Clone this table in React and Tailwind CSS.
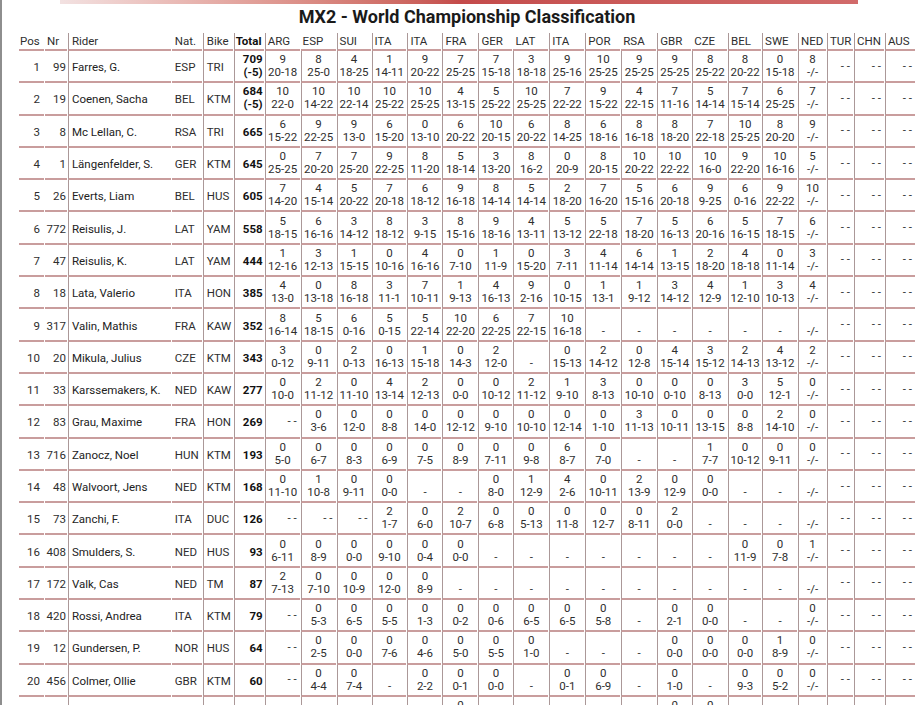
const EVENTS = ["ARG", "ESP", "SUI", "ITA", "ITA", "FRA", "GER", "LAT", "ITA", "POR", "RSA", "GBR", "CZE", "BEL", "SWE", "NED", "TUR", "CHN", "AUS"];

// header cells without a divider on their left
const NO_HEAD_LINE = [1, 7, 10, 12];

const COLS = [
  "w-[25px]", "w-[22px]", "w-[103px]", "w-[30px]", "w-[30px]", "w-[30px]",
  "w-[35px]", "w-[35px]", "w-[34px]", "w-[35px]", "w-[34px]", "w-[35px]", "w-[34px]", "w-[35px]",
  "w-[35px]", "w-[35px]", "w-[35px]", "w-[34px]", "w-[35px]", "w-[33px]", "w-[35px]",
  "w-[28px]", "w-[26px]", "w-[30px]", "w-[30px]",
];

const riders = [
  [1, 99, "Farres, G.", "ESP", "TRI", "709", "(-5)", ["9 20-18", "8 25-0", "4 18-25", "1 14-11", "9 20-22", "7 25-25", "7 15-18", "3 18-18", "9 25-16", "10 25-25", "9 25-25", "9 25-25", "8 25-22", "8 20-22", "0 15-18", "8 -/-"]],
  [2, 19, "Coenen, Sacha", "BEL", "KTM", "684", "(-5)", ["10 22-0", "10 14-22", "10 22-14", "10 25-22", "10 25-25", "4 13-15", "5 25-22", "10 25-25", "7 22-22", "9 15-22", "4 22-15", "7 11-16", "5 14-14", "7 15-14", "6 25-25", "7 -/-"]],
  [3, 8, "Mc Lellan, C.", "RSA", "TRI", "665", null, ["6 15-22", "9 22-25", "9 13-0", "6 15-20", "0 13-10", "6 20-22", "10 20-15", "6 20-22", "8 14-25", "6 18-16", "8 16-18", "8 18-20", "7 22-18", "10 25-25", "8 20-20", "9 -/-"]],
  [4, 1, "Längenfelder, S.", "GER", "KTM", "645", null, ["0 25-25", "7 20-20", "7 25-20", "9 22-25", "8 11-20", "5 18-14", "3 13-20", "8 16-2", "0 20-9", "8 20-15", "10 20-22", "10 22-22", "10 16-0", "9 22-20", "10 16-16", "5 -/-"]],
  [5, 26, "Everts, Liam", "BEL", "HUS", "605", null, ["7 14-20", "4 15-14", "5 20-22", "7 20-18", "6 18-12", "9 16-18", "8 14-14", "5 14-14", "2 18-20", "7 16-20", "5 15-16", "6 20-18", "9 9-25", "6 0-16", "9 22-22", "10 -/-"]],
  [6, 772, "Reisulis, J.", "LAT", "YAM", "558", null, ["5 18-15", "6 16-16", "3 14-12", "8 18-12", "3 9-15", "8 15-16", "9 18-16", "4 13-11", "5 13-12", "5 22-18", "7 18-20", "5 16-13", "6 20-16", "5 16-15", "7 18-15", "6 -/-"]],
  [7, 47, "Reisulis, K.", "LAT", "YAM", "444", null, ["1 12-16", "3 12-13", "1 15-15", "0 10-16", "4 16-16", "0 7-10", "1 11-9", "0 15-20", "3 7-11", "4 11-14", "6 14-14", "1 13-15", "2 18-20", "4 18-18", "0 11-14", "3 -/-"]],
  [8, 18, "Lata, Valerio", "ITA", "HON", "385", null, ["4 13-0", "0 13-18", "8 16-18", "3 11-1", "7 10-11", "1 9-13", "4 16-13", "9 2-16", "0 10-15", "1 13-1", "1 9-12", "3 14-12", "4 12-9", "1 12-10", "3 10-13", "4 -/-"]],
  [9, 317, "Valin, Mathis", "FRA", "KAW", "352", null, ["8 16-14", "5 18-15", "6 0-16", "5 0-15", "5 22-14", "10 22-20", "6 22-25", "7 22-15", "10 16-18", "-", "-", "-", "-", "-", "-", "-/-"]],
  [10, 20, "Mikula, Julius", "CZE", "KTM", "343", null, ["3 0-12", "0 9-11", "2 0-13", "0 16-13", "1 15-18", "0 14-3", "2 12-0", "-", "0 15-13", "2 14-12", "0 12-8", "4 15-14", "3 15-12", "2 14-13", "4 13-12", "2 -/-"]],
  [11, 33, "Karssemakers, K.", "NED", "KAW", "277", null, ["0 10-0", "2 11-12", "0 11-10", "4 13-14", "2 12-13", "0 0-0", "0 10-12", "2 11-12", "1 9-10", "3 8-13", "0 10-10", "0 0-10", "0 8-13", "3 0-0", "5 12-1", "0 -/-"]],
  [12, 83, "Grau, Maxime", "FRA", "HON", "269", null, ["--", "0 3-6", "0 12-0", "0 8-8", "0 14-0", "0 12-12", "0 9-10", "0 10-10", "0 12-14", "0 1-10", "3 11-13", "0 10-11", "0 13-15", "0 8-8", "2 14-10", "0 -/-"]],
  [13, 716, "Zanocz, Noel", "HUN", "KTM", "193", null, ["0 5-0", "0 6-7", "0 8-3", "0 6-9", "0 7-5", "0 8-9", "0 7-11", "0 9-8", "6 8-7", "0 7-0", "-", "-", "1 7-7", "0 10-12", "0 9-11", "0 -/-"]],
  [14, 48, "Walvoort, Jens", "NED", "KTM", "168", null, ["0 11-10", "1 10-8", "0 9-11", "0 0-0", "-", "-", "0 8-0", "1 12-9", "4 2-6", "0 10-11", "2 13-9", "0 12-9", "0 0-0", "-", "-", "-/-"]],
  [15, 73, "Zanchi, F.", "ITA", "DUC", "126", null, ["--", "--", "--", "2 1-7", "0 6-0", "2 10-7", "0 6-8", "0 5-13", "0 11-8", "0 12-7", "0 8-11", "2 0-0", "-", "-", "-", "-/-"]],
  [16, 408, "Smulders, S.", "NED", "HUS", "93", null, ["0 6-11", "0 8-9", "0 0-0", "0 9-10", "0 0-4", "0 0-0", "-", "-", "-", "-", "-", "-", "-", "0 11-9", "0 7-8", "1 -/-"]],
  [17, 172, "Valk, Cas", "NED", "TM", "87", null, ["2 7-13", "0 7-10", "0 10-9", "0 12-0", "0 8-9", "-", "-", "-", "-", "-", "-", "-", "-", "-", "-", "-/-"]],
  [18, 420, "Rossi, Andrea", "ITA", "KTM", "79", null, ["--", "0 5-3", "0 6-5", "0 5-5", "0 1-3", "0 0-2", "0 0-6", "0 6-5", "0 6-5", "0 5-8", "-", "0 2-1", "0 0-0", "-", "-", "0 -/-"]],
  [19, 12, "Gundersen, P.", "NOR", "HUS", "64", null, ["--", "0 2-5", "0 0-0", "0 7-6", "0 4-6", "0 5-0", "0 5-5", "0 1-0", "-", "-", "-", "0 0-0", "0 0-0", "0 0-0", "1 8-9", "0 -/-"]],
  [20, 456, "Colmer, Ollie", "GBR", "KTM", "60", null, ["--", "0 4-4", "0 7-4", "-", "0 2-2", "0 0-1", "0 0-0", "-", "0 0-1", "0 6-9", "-", "0 1-0", "-", "0 9-3", "0 5-2", "0 -/-"]],
  [21, 74, "Horgmo, Kevin", "NOR", "HON", "55", null, ["--", "--", "-", "-", "-", "0 3-1", "-", "-", "-", "-", "-", "0 1-2", "0 4-1", "-", "-", "-/-"]],
];

const LINE = "border-l border-l-[#ab9898]";
const BOTTOM = "border-b-2 border-b-[#c99d9d]";

function ResultCell({ value, narrow }) {
  if (value === "--") {
    return (
      <td className={`${LINE} ${BOTTOM} text-right align-middle pr-[3px]`}>- -</td>
    );
  }
  const parts = value.split(" ");
  const top = parts.length > 1 ? parts[0] : "\u00a0";
  const bottom = parts.length > 1 ? parts[1] : parts[0];
  return (
    <td className={`${LINE} ${BOTTOM} text-center align-middle ${narrow ? "px-0" : "px-[1px]"}`}>
      <div>{top}</div>
      <div>{bottom}</div>
    </td>
  );
}

export default function App() {
  return (
    <div className="w-[916px] h-[705px] overflow-hidden bg-white border-l-2 border-l-[#8e8e8e] font-['Roboto',sans-serif] text-[#2e2e2e]">
      <div className="h-[4px] mx-[58px] bg-linear-to-r from-[#efdada] via-[#b51d1d] to-[#c64545] opacity-80"></div>
      <div className="ml-[16px] h-[29px] pt-[3px] text-center text-[18px] leading-[20px] font-bold text-[#1a1a1a]">
        MX2 - World Championship Classification
      </div>
      <table className="ml-[16px] table-fixed border-separate border-spacing-x-px border-spacing-y-0 text-[11.5px] leading-[13px] whitespace-nowrap">
        <colgroup>
          {COLS.map((c, i) => (
            <col key={i} className={c} />
          ))}
        </colgroup>
        <thead>
          <tr className="h-[18px]">
            <th className={`${BOTTOM} font-normal text-left pl-[1px]`}>Pos</th>
            <th className={`${BOTTOM} font-normal text-left pl-[2px]`}>Nr</th>
            <th className={`${LINE} ${BOTTOM} font-normal text-left pl-[3px]`}>Rider</th>
            <th className={`${BOTTOM} font-normal text-left pl-[3px]`}>Nat.</th>
            <th className={`${LINE} ${BOTTOM} font-normal text-left pl-[3px]`}>Bike</th>
            <th className={`${LINE} ${BOTTOM} font-bold text-left pl-[1px] text-[#111]`}>Total</th>
            {EVENTS.map((e, i) => (
              <th
                key={i}
                className={`${NO_HEAD_LINE.includes(i) ? "" : LINE} ${BOTTOM} font-normal text-left pl-[2px]`}
              >
                {e}
              </th>
            ))}
          </tr>
        </thead>
        <tbody>
          {riders.map((r) => (
            <tr key={r[0]} className="h-[32.3px]">
              <td className={`${BOTTOM} text-right pr-[4px] pt-[3px]`}>{r[0]}</td>
              <td className={`${BOTTOM} text-right pr-[1px] pt-[3px]`}>{r[1]}</td>
              <td className={`${LINE} ${BOTTOM} text-left pl-[3px] pt-[3px] text-[#222]`}>{r[2]}</td>
              <td className={`${BOTTOM} text-left pl-[3px] pt-[3px]`}>{r[3]}</td>
              <td className={`${LINE} ${BOTTOM} text-left pl-[3px] pt-[3px]`}>{r[4]}</td>
              <td className={`${LINE} ${BOTTOM} text-right pr-[1px] font-bold text-[#111] ${r[6] ? "" : "pt-[3px]"}`}>
                <div>{r[5]}</div>
                {r[6] && <div>{r[6]}</div>}
              </td>
              {r[7].map((v, i) => (
                <ResultCell key={i} value={v} narrow={i === 15} />
              ))}
              <ResultCell value="--" />
              <ResultCell value="--" />
              <ResultCell value="--" />
            </tr>
          ))}
        </tbody>
      </table>
    </div>
  );
}
